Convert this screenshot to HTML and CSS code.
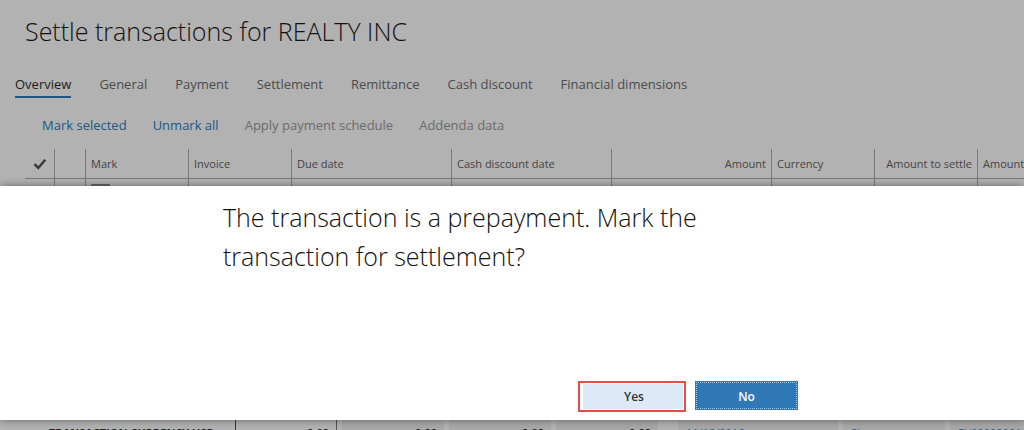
FILE: index.html
```html
<!DOCTYPE html>
<html lang="en">
<head>
<meta charset="utf-8">
<title>Settle transactions</title>
<link rel="stylesheet" href="styles.css">
</head>
<body>
<div class="app">
  <main class="page">
    <h1 class="title">Settle transactions for REALTY INC</h1>
    <nav class="tabs">
      <a class="tab tab-active" href="#overview">Overview</a>
      <a class="tab" href="#general">General</a>
      <a class="tab" href="#payment">Payment</a>
      <a class="tab" href="#settlement">Settlement</a>
      <a class="tab" href="#remittance">Remittance</a>
      <a class="tab" href="#discount">Cash discount</a>
      <a class="tab" href="#dimensions">Financial dimensions</a>
    </nav>
    <div class="toolbar">
      <button class="action" type="button">Mark selected</button>
      <button class="action" type="button">Unmark all</button>
      <button class="action" type="button" disabled>Apply payment schedule</button>
      <button class="action" type="button" disabled>Addenda data</button>
    </div>
    <div class="grid-area">
      <table class="grid">
        <colgroup>
          <col class="w-check"><col class="w-status"><col class="w-short"><col class="w-short"><col class="w-long"><col class="w-long"><col class="w-long"><col class="w-short"><col class="w-short"><col>
        </colgroup>
        <thead>
          <tr>
            <th class="check-cell"><svg class="check" viewBox="0 0 14 12" aria-label="Select all"><path d="M1.5 6.2 5.3 10 12.2 1.8" fill="none" stroke="#3a3a3a" stroke-width="2.5"/></svg></th>
            <th></th>
            <th>Mark</th>
            <th>Invoice</th>
            <th>Due date</th>
            <th>Cash discount date</th>
            <th class="num">Amount</th>
            <th>Currency</th>
            <th class="num">Amount to settle</th>
            <th>Amount</th>
          </tr>
        </thead>
        <tbody>
          <tr>
            <td></td><td></td><td class="mark-cell"><input class="mark" type="checkbox" aria-label="Mark"></td><td></td><td></td><td></td><td></td><td></td><td></td><td></td>
          </tr>
        </tbody>
      </table>
    </div>
  </main>
  <footer class="totals">
    <div class="total-label">TRANSACTION CURRENCY USD</div>
    <div class="total total-plain">0.00</div>
    <div class="total">0.00</div>
    <div class="total">0.00</div>
    <div class="total">0.00</div>
    <div class="detail detail-date">11/12/2016</div>
    <div class="detail detail-short">Sl</div>
    <div class="detail detail-rest">PV00000001</div>
  </footer>
  <section class="dialog" role="dialog" aria-modal="true" aria-labelledby="question">
    <div class="dialog-body">
      <h2 class="question" id="question">The transaction is a prepayment. Mark the transaction for settlement?</h2>
      <div class="buttons">
        <button class="button button-yes" type="button">Yes</button>
        <button class="button button-no" type="button">No</button>
      </div>
    </div>
  </section>
</div>
</body>
</html>
```
FILE: styles.css
```css
* { box-sizing: border-box; }

body {
  margin: 0;
  background: #b2b2b2;
  color: #444;
  font-family: "Open Sans", "Noto Sans", sans-serif;
  font-size: 11px;
}

.app {
  position: relative;
  display: flex;
  flex-direction: column;
  height: 100vh;
  overflow: hidden;
}

.page {
  flex: 1;
  min-height: 0;
  overflow: hidden;
}

.title {
  margin: 0;
  padding: 13px 25px 0;
  color: #111;
  font-size: 25px;
  font-weight: 300;
  line-height: 36px;
  white-space: nowrap;
}

.tabs {
  display: flex;
  gap: 28px;
  padding: 25px 15px 0;
}

.tab {
  padding-bottom: 2px;
  border-bottom: 2px solid transparent;
  color: #4b4b4b;
  font-size: 13px;
  line-height: 20px;
  text-decoration: none;
  white-space: nowrap;
}

.tab-active {
  border-color: #245782;
  color: #1c1c1c;
}

.toolbar {
  display: flex;
  gap: 26px;
  padding: 17px 42px 0;
}

.action {
  padding: 0;
  border: 0;
  background: none;
  color: #205685;
  font: inherit;
  font-size: 13px;
  line-height: 20px;
  white-space: nowrap;
}

.action:disabled { color: #6b6b6b; }

.grid-area { padding: 14px 0 0 25px; }

.grid {
  width: 100%;
  table-layout: fixed;
  border-collapse: separate;
  border-spacing: 0;
}

.w-check { width: 29px; }
.w-status { width: 31px; }
.w-short { width: 103px; }
.w-long { width: 160px; }

.grid th,
.grid td {
  height: 30px;
  padding: 0 5px;
  border-left: 1px solid #797979;
  overflow: hidden;
  font-weight: 400;
  text-align: left;
  white-space: nowrap;
}

.grid th { border-bottom: 1px solid #797979; }

.grid th:first-child,
.grid td:first-child { border-left: 0; }

.grid .num { text-align: right; }

.grid .check-cell { padding: 0 0 0 8px; }

.check {
  display: block;
  width: 14px;
  height: 12px;
}

.grid .mark-cell { vertical-align: top; padding-top: 5px; }

.mark {
  display: block;
  width: 19px;
  height: 19px;
  margin: 0;
  appearance: none;
  border: 2px solid #666;
}

.totals {
  display: flex;
  gap: 5px;
  height: 14px;
  font-size: 11px;
  line-height: 16px;
  white-space: nowrap;
}

.total-label,
.total,
.detail {
  flex: none;
  height: 40px;
  padding-top: 9px;
}

.total-label {
  width: 236px;
  padding-left: 49px;
  border-right: 1px solid #333;
  color: #222;
  font-weight: 700;
}

.total {
  width: 102px;
  padding-right: 7px;
  background: #a8a8a8;
  color: #111;
  font-weight: 700;
  text-align: right;
}

.total-plain {
  width: 96px;
  border-right: 1px solid #555;
  background: none;
}

.detail {
  padding-left: 8px;
  background: #a8a8a8;
  color: #245782;
}

.detail-date { width: 160px; margin-left: 15px; }
.detail-short { width: 102px; }
.detail-rest { flex: 1; }

.dialog {
  position: absolute;
  inset: auto 0 10px;
  display: flex;
  justify-content: center;
  background: #fff;
  box-shadow: 0 0 8px rgba(0, 0, 0, 0.45);
}

.dialog-body {
  display: flex;
  flex-direction: column;
  justify-content: space-between;
  width: 578px;
  min-height: 234px;
  padding: 12px 3px 8px 0;
}

.question {
  max-width: 520px;
  margin: 0;
  color: #111;
  font-size: 25px;
  font-weight: 300;
  line-height: 39px;
}

.buttons {
  display: flex;
  align-items: flex-start;
  justify-content: flex-end;
  gap: 9px;
}

.button {
  padding: 0;
  font: inherit;
  font-size: 12px;
  font-weight: 600;
}

.button-yes {
  width: 108px;
  height: 31px;
  padding-left: 4px;
  border: 2px solid #e84c44;
  background: #dceaf8;
  box-shadow: inset 3px 0 #fff, inset 0 0 0 1px #fff;
  color: #333;
}

.button-no {
  width: 103px;
  height: 29px;
  padding-top: 2px;
  border: 1px solid #2f79b6;
  outline: 1px dotted #9cc4e4;
  outline-offset: -2px;
  background: #2f79b6;
  color: #fff;
}
```
